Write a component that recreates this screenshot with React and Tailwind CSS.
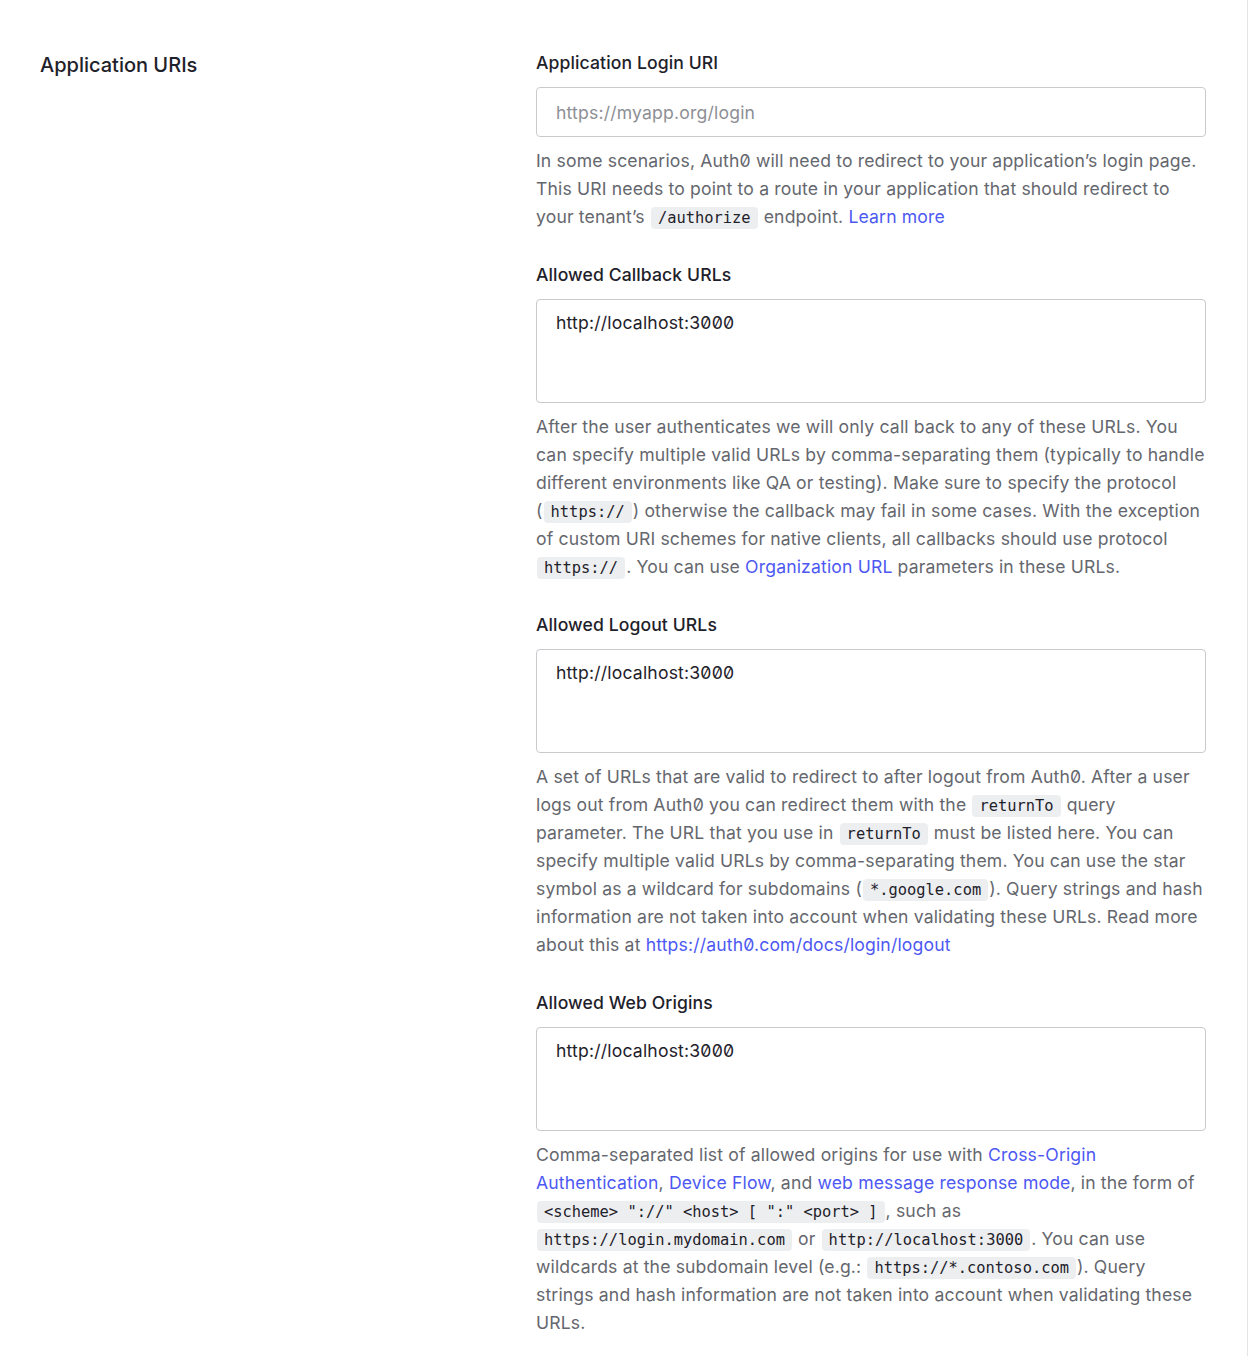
import React from "react";

const Code = ({ children }) => (
  <code className="mx-[1px] rounded-[4px] bg-[#eceef0] px-[7px] py-[2px] font-['DejaVu_Sans_Mono','Liberation_Mono',monospace] text-[15.4px] leading-[20px] tracking-normal text-[#1e212a] [font-feature-settings:normal]">
    {children}
  </code>
);

const A = ({ children }) => (
  <a href="#" className="text-[#4d58f3] no-underline">
    {children}
  </a>
);

const Field = ({ label, value, placeholder, multiline, children }) => (
  <div className="flex flex-col">
    <label className="mb-3 text-[17.6px] font-medium leading-6 tracking-[0.1px] text-[#1e212a]">
      {label}
    </label>
    {multiline ? (
      <textarea
        defaultValue={value}
        className="h-[104px] w-full resize-none rounded-[4px] border border-[#c9cace] px-[19px] py-[11px] text-[17.6px] leading-6 tracking-[0.18px] text-[#1e212a] outline-none"
      />
    ) : (
      <input
        placeholder={placeholder}
        className="h-[50px] w-full rounded-[4px] border border-[#c9cace] px-[19px] text-[17.6px] tracking-[0.18px] text-[#1e212a] outline-none placeholder:text-[#8d8f95]"
      />
    )}
    <p className="mt-[10px] text-[17.6px] leading-7 tracking-[0.15px] text-[#65676e]">
      {children}
    </p>
  </div>
);

export default function App() {
  return (
    <div className="min-h-[1356px] w-[1248px] border-r border-[#e3e4e7] bg-white font-['Inter',sans-serif] [font-feature-settings:'zero']">
      <div className="flex pl-10 pr-[41px] pt-[51px] pb-[20px]">
        <div className="w-[496px] shrink-0">
          <h2 className="text-[20px] font-medium leading-7 text-[#1e212a]">
            Application URIs
          </h2>
        </div>
        <div className="flex w-[670px] flex-col gap-8">
          <Field label="Application Login URI" placeholder="https://myapp.org/login">
            In some scenarios, Auth0 will need to redirect to your application’s login
            page. This URI needs to point to a route in your application that should
            redirect to your tenant’s <Code>/authorize</Code> endpoint.{" "}
            <A>Learn more</A>
          </Field>
          <Field label="Allowed Callback URLs" multiline value="http://localhost:3000">
            After the user authenticates we will only call back to any of these URLs.
            You can specify multiple valid URLs by comma-separating them (typically to
            handle different environments like QA or testing). Make sure to specify
            the protocol (<Code>https://</Code>) otherwise the callback may fail in
            some cases. With the exception of custom URI schemes for native clients,
            all callbacks should use protocol <Code>https://</Code>. You can use{" "}
            <A>Organization URL</A> parameters in these URLs.
          </Field>
          <Field label="Allowed Logout URLs" multiline value="http://localhost:3000">
            A set of URLs that are valid to redirect to after logout from Auth0. After
            a user logs out from Auth0 you can redirect them with the{" "}
            <Code>returnTo</Code> query parameter. The URL that you use in{" "}
            <Code>returnTo</Code> must be listed here. You can specify multiple valid
            URLs by comma-separating them. You can use the star symbol as a wildcard
            for subdomains (<Code>*.google.com</Code>). Query strings and hash
            information are not taken into account when validating these URLs. Read
            more about this at <A>https://auth0.com/docs/login/logout</A>
          </Field>
          <Field label="Allowed Web Origins" multiline value="http://localhost:3000">
            Comma-separated list of allowed origins for use with{" "}
            <A>Cross-Origin Authentication</A>, <A>Device Flow</A>, and{" "}
            <A>web message response mode</A>, in the form of{" "}
            <Code>{'<scheme> "://" <host> [ ":" <port> ]'}</Code>, such as{" "}
            <Code>https://login.mydomain.com</Code> or{" "}
            <Code>http://localhost:3000</Code>. You can use wildcards at the subdomain
            level (e.g.: <Code>https://*.contoso.com</Code>). Query strings and hash
            information are not taken into account when validating these URLs.
          </Field>
        </div>
      </div>
    </div>
  );
}
